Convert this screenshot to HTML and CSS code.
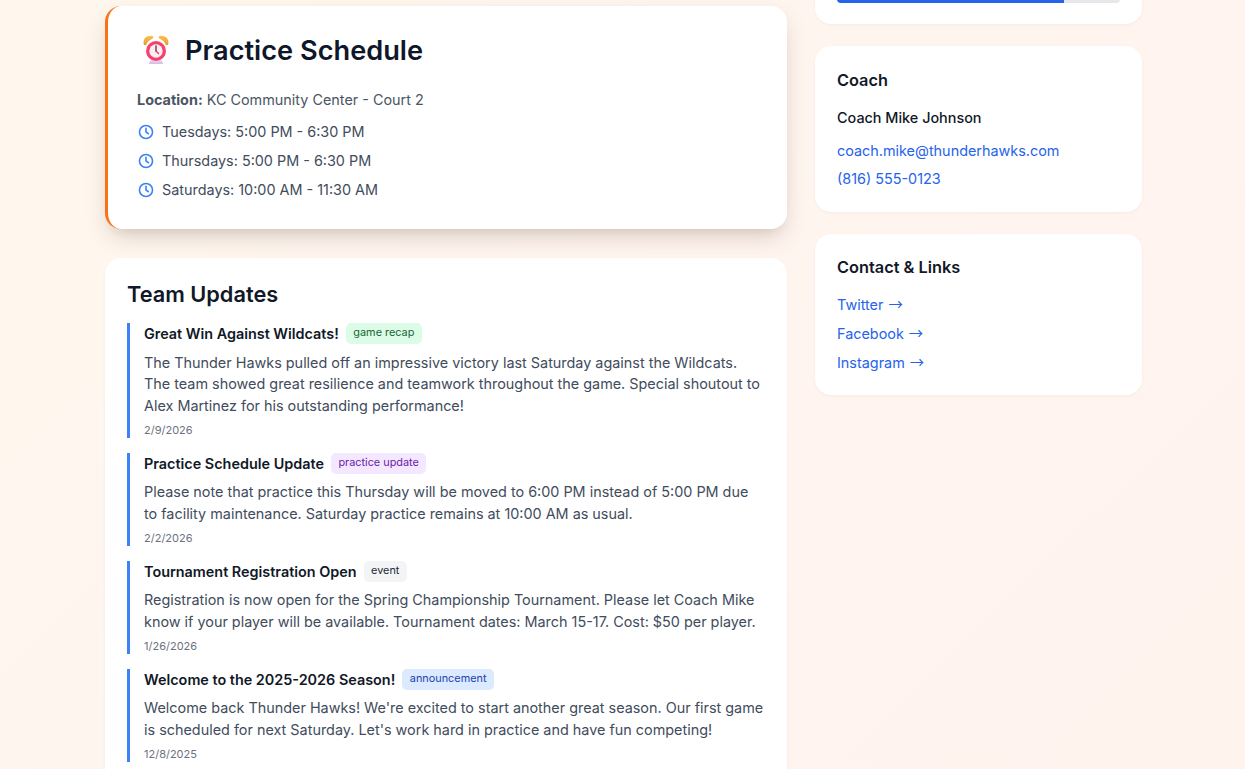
FILE: index.html
```html
<!DOCTYPE html>
<html lang="en">
<head>
<meta charset="utf-8">
<title>Thunder Hawks</title>
<link rel="stylesheet" href="styles.css">
</head>
<body>
<div class="layout">
  <main class="main-col">
    <section class="card schedule">
      <h1 class="schedule-title">
        <svg class="alarm" viewBox="0 0 26 30" aria-hidden="true">
          <defs>
            <linearGradient id="bell" x1="0" y1="0" x2="0" y2="1"><stop offset="0" stop-color="#fcc24a"/><stop offset="1" stop-color="#e39a35"/></linearGradient>
            <linearGradient id="base" x1="0" y1="0" x2="0" y2="1"><stop offset="0" stop-color="#f0def6"/><stop offset="1" stop-color="#d9b8ea"/></linearGradient>
          </defs>
          <path d="M0.800 9.500C-0.500 4 3.500 0 9.500 1C10.500 1.500 10.500 3 9.500 3.800C6.500 4.800 4.500 6.800 3.200 9.700C2.500 10.500 1.200 10.400 0.800 9.500Z" fill="url(#bell)"/>
          <path d="M25.200 9.500C26.500 4 22.500 0 16.500 1C15.500 1.500 15.500 3 16.500 3.800C19.500 4.800 21.500 6.800 22.800 9.700C23.500 10.500 24.800 10.400 25.200 9.500Z" fill="url(#bell)"/>
          <path d="M6 29C6 26 8.500 24 13 24C17.500 24 20 26 20 29Z" fill="url(#base)"/>
          <circle cx="13" cy="16" r="10" fill="#f6416c"/>
          <circle cx="13" cy="16" r="6.700" fill="#fbeef2"/>
          <path d="M13 11V16" fill="none" stroke="#5f2a3f" stroke-width="1.300" stroke-linecap="round"/>
          <path d="M13 16L15.500 18.500" fill="none" stroke="#e8355f" stroke-width="1.300" stroke-linecap="round"/>
        </svg>
        <span>Practice Schedule</span>
      </h1>
      <p class="location"><strong>Location:</strong> KC Community Center - Court 2</p>
      <ul class="times">
        <li><svg class="clock" viewBox="0 0 24 24"><circle cx="12" cy="12" r="9.800"/><path d="M12 6.500V12L15.500 14.500"/></svg>Tuesdays: 5:00 PM - 6:30 PM</li>
        <li><svg class="clock" viewBox="0 0 24 24"><circle cx="12" cy="12" r="9.800"/><path d="M12 6.500V12L15.500 14.500"/></svg>Thursdays: 5:00 PM - 6:30 PM</li>
        <li><svg class="clock" viewBox="0 0 24 24"><circle cx="12" cy="12" r="9.800"/><path d="M12 6.500V12L15.500 14.500"/></svg>Saturdays: 10:00 AM - 11:30 AM</li>
      </ul>
    </section>

    <section class="card updates">
      <h2 class="updates-title">Team Updates</h2>
      <article class="update">
        <div class="update-head"><h3>Great Win Against Wildcats!</h3><span class="tag tag-green">game recap</span></div>
        <p>The Thunder Hawks pulled off an impressive victory last Saturday against the Wildcats. The team showed great resilience and teamwork throughout the game. Special shoutout to Alex Martinez for his outstanding performance!</p>
        <time>2/9/2026</time>
      </article>
      <article class="update">
        <div class="update-head"><h3>Practice Schedule Update</h3><span class="tag tag-purple">practice update</span></div>
        <p>Please note that practice this Thursday will be moved to 6:00 PM instead of 5:00 PM due to facility maintenance. Saturday practice remains at 10:00 AM as usual.</p>
        <time>2/2/2026</time>
      </article>
      <article class="update">
        <div class="update-head"><h3>Tournament Registration Open</h3><span class="tag tag-gray">event</span></div>
        <p>Registration is now open for the Spring Championship Tournament. Please let Coach Mike know if your player will be available. Tournament dates: March 15-17. Cost: $50 per player.</p>
        <time>1/26/2026</time>
      </article>
      <article class="update">
        <div class="update-head"><h3>Welcome to the 2025-2026 Season!</h3><span class="tag tag-blue">announcement</span></div>
        <p>Welcome back Thunder Hawks! We're excited to start another great season. Our first game is scheduled for next Saturday. Let's work hard in practice and have fun competing!</p>
        <time>12/8/2025</time>
      </article>
    </section>
  </main>

  <aside class="side-col">
    <section class="card side-card progress-card">
      <div class="progress"><div class="progress-fill"></div></div>
    </section>
    <section class="card side-card coach-card">
      <h3 class="side-title">Coach</h3>
      <p class="coach-name">Coach Mike Johnson</p>
      <a class="side-link" href="#">coach.mike@thunderhawks.com</a>
      <a class="side-link" href="#">(816) 555-0123</a>
    </section>
    <section class="card side-card links-card">
      <h3 class="side-title">Contact &amp; Links</h3>
      <div class="links">
        <a class="side-link" href="#">Twitter <span class="arrow">→</span></a>
        <a class="side-link" href="#">Facebook <span class="arrow">→</span></a>
        <a class="side-link" href="#">Instagram <span class="arrow">→</span></a>
      </div>
    </section>
  </aside>
</div>
</body>
</html>
```
FILE: styles.css
```css
* { box-sizing: border-box; }
html, body { margin: 0; height: 769px; overflow: hidden; }
body {
  background: linear-gradient(135deg, #fff7ee 0%, #fff4ef 65%, #fff3ee 100%);
  font-family: Inter, "Liberation Sans", sans-serif;
  color: #111827;
}
.layout {
  display: grid;
  grid-template-columns: 682px 327px;
  column-gap: 28px;
  align-items: start;
  margin-left: 105px;
  padding-top: 6px;
}
.card {
  background: #fff;
  border-radius: 16px;
  box-shadow: 0 1px 3px rgba(120, 80, 50, 0.06);
}
.schedule {
  height: 223px;
  border-left: 3px solid #f97316;
  padding: 25px 29px 24px;
  box-shadow: 0 10px 25px -5px rgba(70, 40, 20, 0.22), 0 8px 10px -6px rgba(70, 40, 20, 0.08);
}
.schedule-title {
  display: flex;
  align-items: center;
  gap: 16px;
  margin: 0 0 18px;
  font-size: 27.2px;
  line-height: 40px;
  font-weight: 600;
  color: #0f172a;
}
.alarm { width: 26px; height: 30px; margin-left: 6px; margin-top: -3px; }
.location { margin: 0 0 6px; font-size: 14.4px; line-height: 22px; color: #4b5563; }
.location strong { font-weight: 700; }
.times { list-style: none; margin: 0; padding: 0; }
.times li {
  display: flex;
  align-items: center;
  gap: 8px;
  height: 29px;
  font-size: 14.4px;
  color: #414c5c;
}
.clock { width: 16px; height: 16px; margin-left: 1px; fill: none; stroke: #3b82f6; stroke-width: 2.4; stroke-linecap: round; stroke-linejoin: round; }
.updates { margin-top: 29px; padding: 22px 22px 0; height: 560px; }
.updates-title { margin: 0 0 15.4px; font-size: 21.76px; line-height: 28px; font-weight: 600; color: #111827; }
.update { border-left: 3px solid #3b82f6; padding-left: 14px; margin-bottom: 15px; }
.update-head { display: flex; align-items: flex-start; gap: 7px; height: 22px; margin-bottom: 6.25px; }
.update-head h3 { margin: 0; font-size: 14.4px; line-height: 22px; font-weight: 600; }
.tag { padding: 0 7.5px; height: 21px; line-height: 19px; border-radius: 5px; font-size: 10.88px; }
.tag-green { background: #dcfce7; color: #166534; }
.tag-purple { background: #f3e8ff; color: #6b21a8; }
.tag-gray { background: #f3f4f6; color: #1f2937; }
.tag-blue { background: #dbeafe; color: #1e40af; }
.update p { margin: 0; font-size: 14.4px; line-height: 21.6px; color: #414c5c; }
.update time { display: block; margin-top: 6.55px; font-size: 11px; line-height: 15px; color: #6b7280; }
.side-col { display: flex; flex-direction: column; gap: 22px; }
.side-card { padding: 22px; }
.progress-card { margin-top: -41px; height: 59px; padding-top: 30px; }
.progress { height: 8px; background: #e5e7eb; border-radius: 4px; overflow: hidden; }
.progress-fill { width: 80.3%; height: 100%; background: #2563eb; }
.coach-card { padding-bottom: 19px; }
.links-card { padding-top: 21px; padding-bottom: 18px; }
.side-title { margin: 0 0 15px; font-size: 16.32px; line-height: 24px; font-weight: 600; color: #111827; }
.coach-name { margin: 0 0 8px; font-size: 14.4px; line-height: 22px; font-weight: 500; color: #111827; }
.side-link { display: block; font-size: 14.4px; line-height: 28px; color: #2563eb; text-decoration: none; }
.links { margin-top: -4px; }
.links .side-link { height: 29px; line-height: 29px; }
.arrow { font-family: "Noto Sans CJK SC", sans-serif; line-height: 1; margin-left: 1px; }
```
